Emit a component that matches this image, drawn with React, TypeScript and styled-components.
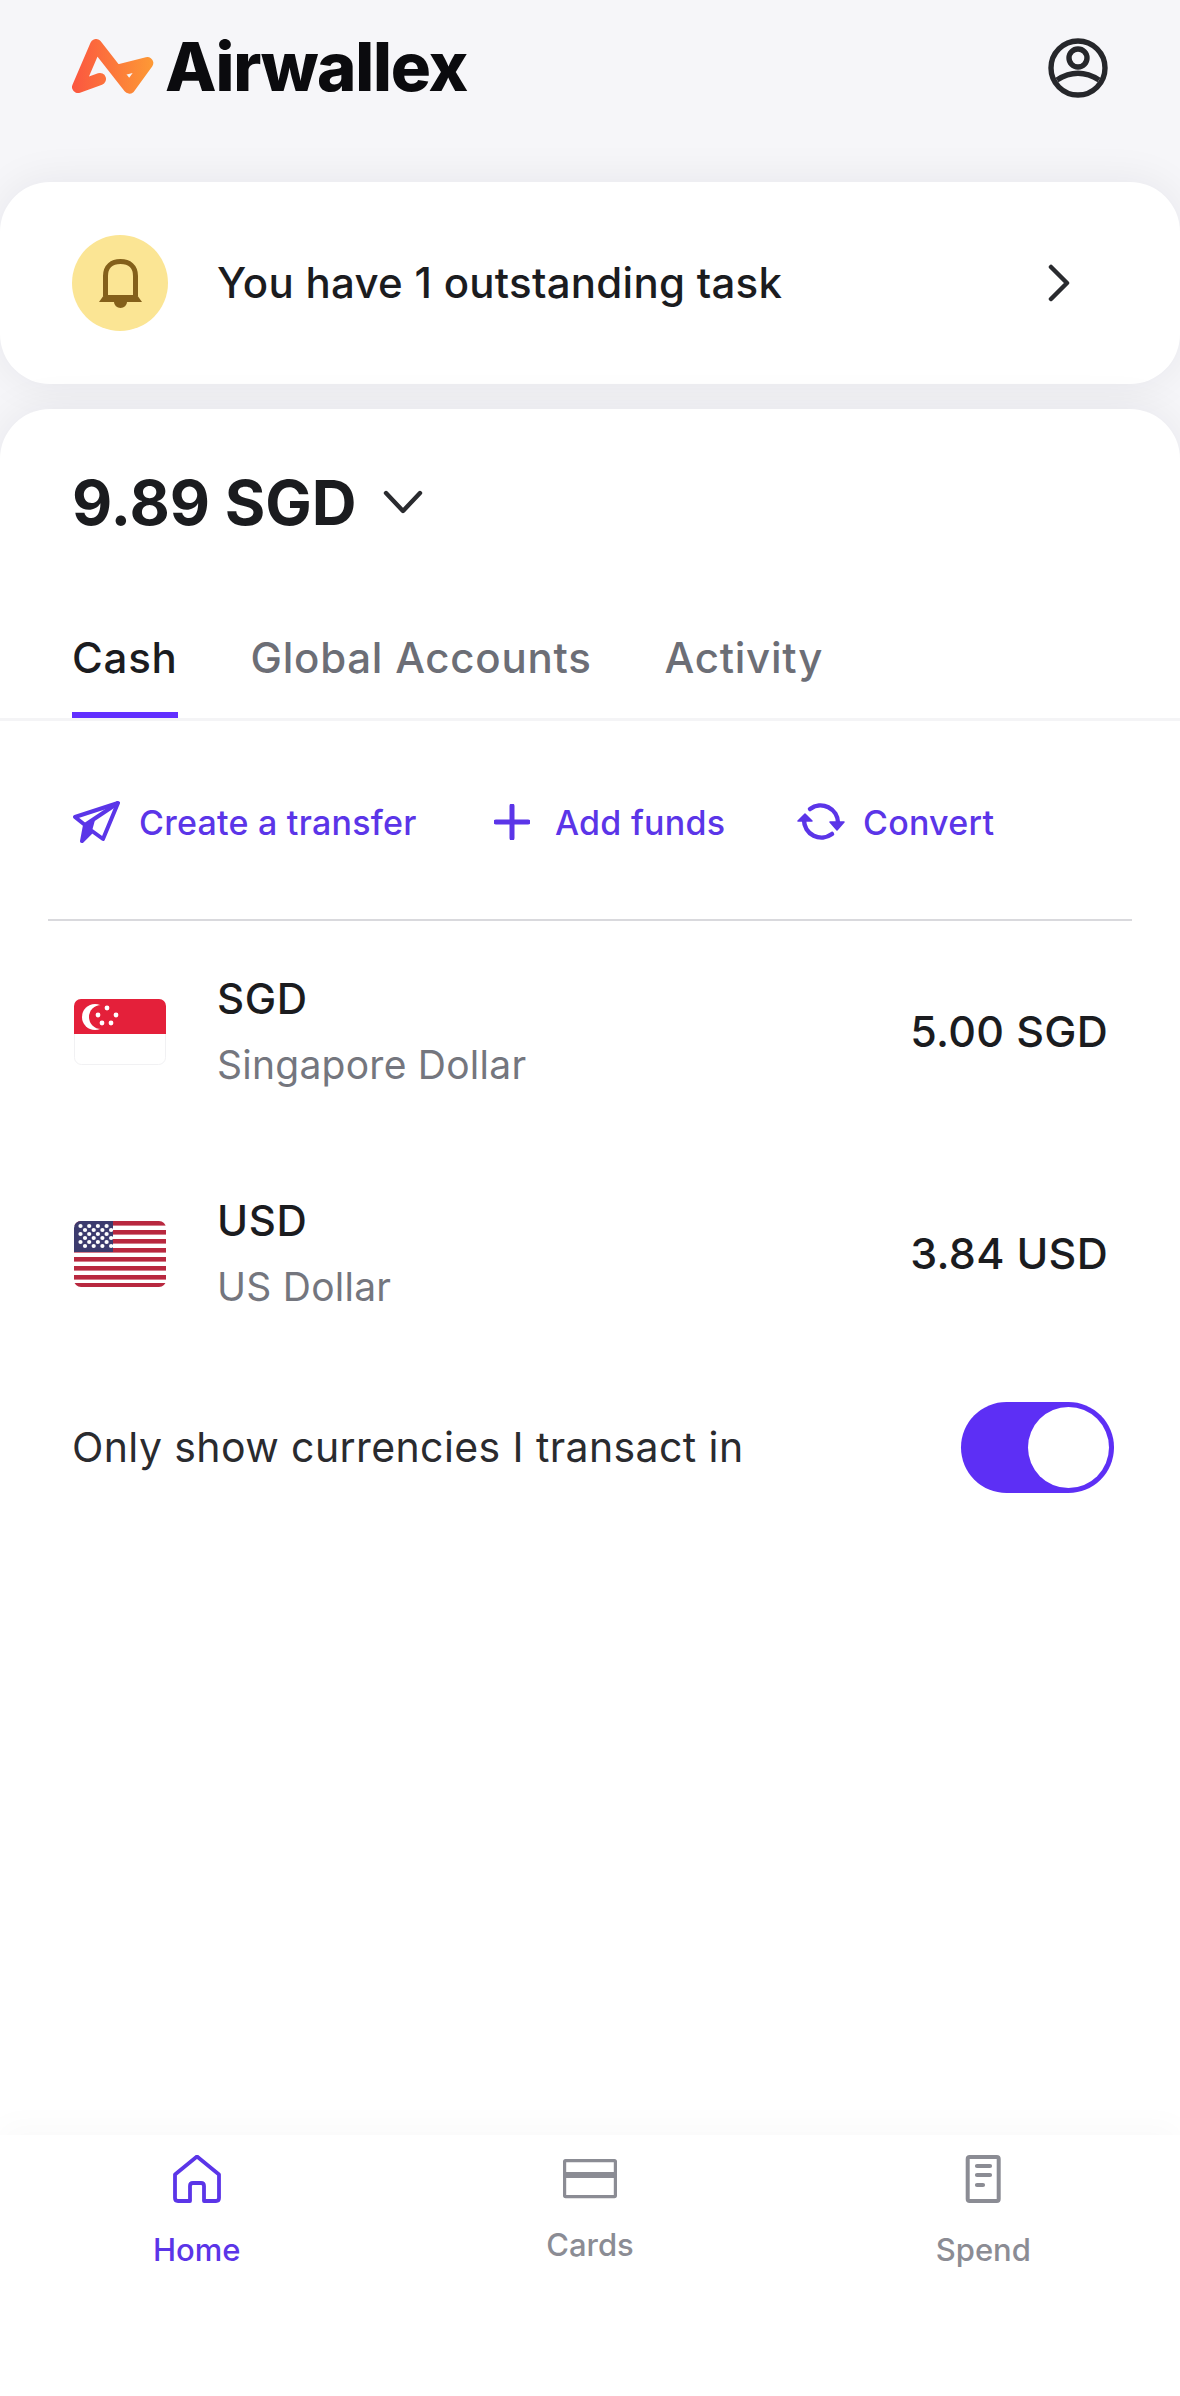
import React from "react";
import styled, { createGlobalStyle } from "styled-components";

const GlobalStyle = createGlobalStyle`
  html, body {
    margin: 0;
    padding: 0;
    background: #ffffff;
    font-family: "Inter", "Liberation Sans", sans-serif;
  }
`;

const Page = styled.div`
  width: 1180px;
  height: 2396px;
  display: flex;
  flex-direction: column;
  overflow: hidden;
  background: #f6f6f9;
`;

const Header = styled.header`
  height: 182px;
  flex: none;
  box-sizing: border-box;
  padding: 36px 72px 0 72px;
  display: flex;
  justify-content: space-between;
  align-items: flex-start;
`;

const Brand = styled.div`
  display: flex;
  align-items: center;
  gap: 11px;
  height: 62px;
`;

const Wordmark = styled.span`
  font-size: 67px;
  font-weight: 800;
  letter-spacing: -1.2px;
  color: #0b0b0e;
  line-height: 62px;
`;

const Avatar = styled.svg`
  width: 60px;
  height: 60px;
  margin-top: 2px;
`;

const TaskCard = styled.section`
  flex: none;
  height: 202px;
  box-sizing: border-box;
  padding: 0 108px 0 72px;
  background: #ffffff;
  border-radius: 50px;
  box-shadow: 0 0 44px rgba(20, 20, 40, 0.07);
  display: flex;
  align-items: center;
  position: relative;
`;

const BellBadge = styled.div`
  width: 96px;
  height: 96px;
  border-radius: 50%;
  background: #fbe594;
  display: flex;
  align-items: center;
  justify-content: center;
`;

const TaskText = styled.span`
  margin: 0 0 2px 49px;
  flex: 1;
  font-size: 42px;
  font-weight: 500;
  letter-spacing: 0.27px;
  color: #1b1c1f;
`;

const Sheet = styled.main`
  flex: 1;
  margin-top: 25px;
  background: #ffffff;
  border-radius: 50px 50px 0 0;
  box-shadow: 0 0 44px rgba(20, 20, 40, 0.07);
  display: flex;
  flex-direction: column;
  position: relative;
`;

const BalanceRow = styled.div`
  height: 186px;
  flex: none;
  padding-left: 72px;
  display: flex;
  align-items: center;
  gap: 26px;
`;

const Balance = styled.span`
  font-size: 62px;
  font-weight: 700;
  letter-spacing: 0;
  color: #1b1c1f;
`;

const Tabs = styled.nav`
  height: 126px;
  flex: none;
  box-sizing: border-box;
  padding-left: 72px;
  border-bottom: 3px solid #f4f4f6;
  display: flex;
  gap: 73px;
`;

const Tab = styled.div<{ $active?: boolean }>`
  height: 123px;
  box-sizing: border-box;
  padding-top: 37px;
  font-size: 42px;
  line-height: 52px;
  font-weight: 500;
  letter-spacing: 0.75px;
  color: ${(p) => (p.$active ? "#1b1c1f" : "#6c6e76")};
  border-bottom: 6px solid ${(p) => (p.$active ? "#612fff" : "transparent")};
`;

const Actions = styled.div`
  height: 198px;
  flex: none;
  box-sizing: border-box;
  padding: 4px 0 0 72px;
  display: flex;
  align-items: center;
`;

const Action = styled.div<{ $gap: number; $width: number }>`
  width: ${(p) => p.$width}px;
  display: flex;
  align-items: center;
  gap: ${(p) => p.$gap}px;
  font-size: 34px;
  font-weight: 500;
  letter-spacing: 0.24px;
  color: #5b35e8;
`;

const Divider = styled.hr`
  margin: 0 48px;
  height: 2px;
  border: 0;
  flex: none;
  background: #d9d9dd;
`;

const CurrencyRow = styled.div`
  height: 222px;
  flex: none;
  box-sizing: border-box;
  padding: 0 72px 0 74px;
  display: flex;
  align-items: center;
`;

const Flag = styled.svg`
  width: 92px;
  height: 66px;
  flex: none;
`;

const CurrencyNames = styled.div`
  margin-left: 51px;
  flex: 1;
  display: flex;
  flex-direction: column;
  gap: 12px;
`;

const Code = styled.div`
  font-size: 42px;
  line-height: 54px;
  font-weight: 500;
  letter-spacing: 0.6px;
  color: #1b1c1f;
`;

const Name = styled.div`
  font-size: 39px;
  line-height: 54px;
  font-weight: 400;
  letter-spacing: 0.25px;
  color: #74767e;
`;

const Amount = styled.div`
  margin-bottom: 3px;
  font-size: 43px;
  font-weight: 500;
  letter-spacing: 0.3px;
  color: #1b1c1f;
`;

const ToggleRow = styled.div`
  height: 164px;
  flex: none;
  box-sizing: border-box;
  padding: 0 66px 0 72px;
  display: flex;
  align-items: center;
  justify-content: space-between;
`;

const ToggleLabel = styled.span`
  font-size: 41px;
  font-weight: 400;
  letter-spacing: 0.4px;
  color: #2a2b2f;
`;

const Toggle = styled.div`
  width: 153px;
  height: 91px;
  box-sizing: border-box;
  padding: 5px;
  border-radius: 46px;
  background: #5d2ff5;
  display: flex;
  justify-content: flex-end;
`;

const Knob = styled.div`
  width: 81px;
  height: 81px;
  border-radius: 50%;
  background: #ffffff;
`;

const BottomNav = styled.footer`
  margin-top: auto;
  height: 261px;
  flex: none;
  background: #ffffff;
  box-shadow: 0 -10px 30px rgba(30, 20, 60, 0.025);
  display: grid;
  grid-template-columns: repeat(3, 1fr);
  position: relative;
`;

const NavItem = styled.div<{ $active?: boolean; $lift?: number }>`
  display: flex;
  flex-direction: column;
  align-items: center;
  box-sizing: border-box;
  padding-top: 20px;
  color: ${(p) => (p.$active ? "#5b35e8" : "#8b8c94")};
  font-size: 31px;
  font-weight: 500;

  span {
    margin-top: ${(p) => 28 - (p.$lift || 0)}px;
    line-height: 38px;
  }
`;

const NavIcon = styled.svg`
  width: 60px;
  height: 48px;
  display: block;
`;

function Logo() {
  return (
    <svg width="82" height="56" viewBox="66 58 246 168">
      <defs>
        <linearGradient id="logoGrad" gradientUnits="userSpaceOnUse" x1="66" y1="0" x2="312" y2="0">
          <stop offset="0" stopColor="#fb5640" />
          <stop offset="1" stopColor="#fd9a35" />
        </linearGradient>
      </defs>
      <path
        d="M150 178 L84 202 L138 76 L238 204 L292 130 L206 152"
        fill="none"
        stroke="url(#logoGrad)"
        strokeWidth="36"
        strokeLinecap="round"
        strokeLinejoin="round"
      />
    </svg>
  );
}

function AvatarIcon() {
  return (
    <Avatar viewBox="0 0 60 60" fill="none" stroke="#26272b" strokeWidth="5.4">
      <circle cx="30" cy="30" r="27" />
      <circle cx="30" cy="20" r="9" />
      <path d="M9 42 Q30 28.6 51 42" />
    </Avatar>
  );
}

function BellIcon() {
  return (
    <svg width="43" height="49" viewBox="0 0 43 49" fill="none" stroke="#84601a" strokeWidth="5">
      <path d="M6.5 37 V17 C6.5 7 13 2.5 21.5 2.5 C30 2.5 36.5 7 36.5 17 V37" />
      <path d="M0 43 L5 36 H38 L43 43 Z" fill="#84601a" stroke="none" />
      <path d="M15 43 H28 A6.5 6 0 0 1 15 43 Z" fill="#84601a" stroke="none" />
    </svg>
  );
}

function PlaneIcon() {
  return (
    <svg width="48" height="42" viewBox="0 0 48 42" fill="none" stroke="#5b35e8" strokeWidth="4" strokeLinejoin="round">
      <path d="M46 2 L3 16 L13 24 L10 40 L20 30 L31 38 Z" />
      <path d="M46 2 L13 24" />
      <path d="M13 24 L23 19 L20 30 L10 40 Z" fill="#5b35e8" stroke="none" />
    </svg>
  );
}

function PlusIcon() {
  return (
    <svg width="36" height="36" viewBox="0 0 36 36" stroke="#5b35e8" strokeWidth="5" strokeLinecap="round">
      <path d="M18 2 V34 M2 18 H34" />
    </svg>
  );
}

function ConvertIcon() {
  return (
    <svg width="48" height="42" viewBox="0 0 48 42" fill="none" stroke="#5b35e8" strokeWidth="4.5" strokeLinecap="round">
      <path d="M13 8 A17.5 17.5 0 0 1 41 22" />
      <path d="M35 33 A17.5 17.5 0 0 1 7 19" />
      <path d="M33 21 H47 L40 29 Z M1 20 H15 L8 13 Z" fill="#5b35e8" stroke="#5b35e8" strokeWidth="1.5" strokeLinejoin="round" />
    </svg>
  );
}

function SingaporeFlag() {
  return (
    <Flag viewBox="0 0 92 66">
      <rect x="0.5" y="0.5" width="91" height="65" rx="7" fill="#ffffff" stroke="#f1f1f3" />
      <path d="M7 0 H85 A7 7 0 0 1 92 7 V35 H0 V7 A7 7 0 0 1 7 0 Z" fill="#e4203a" />
      <circle cx="21" cy="18" r="13" fill="#ffffff" />
      <circle cx="27" cy="18" r="12" fill="#e4203a" />
      <g fill="#ffffff">
        <circle cx="33" cy="9" r="2.4" />
        <circle cx="24" cy="16" r="2.4" />
        <circle cx="42" cy="16" r="2.4" />
        <circle cx="28" cy="24" r="2.4" />
        <circle cx="37" cy="24" r="2.4" />
      </g>
    </Flag>
  );
}

const stripes = [0, 9, 18, 27, 36, 45, 54, 62];
const starRows = [5, 13, 21, 9, 17, 25];

function UsFlag() {
  return (
    <Flag viewBox="0 0 92 66">
      <defs>
        <clipPath id="usClip">
          <rect width="92" height="66" rx="7" />
        </clipPath>
      </defs>
      <g clipPath="url(#usClip)">
        <rect width="92" height="66" fill="#ffffff" />
        {stripes.map((y) => (
          <rect key={y} y={y} width="92" height="4.6" fill="#b8283f" />
        ))}
        <rect width="39" height="31" fill="#3c3b6e" />
        {starRows.map((y, i) =>
          [0, 1, 2, 3].map((n) => (
            <circle key={`${i}-${n}`} cx={(i < 3 ? 6.5 : 11) + n * 8.7} cy={y} r="2.1" fill="#ffffff" />
          ))
        )}
      </g>
    </Flag>
  );
}

function HomeIcon() {
  return (
    <NavIcon viewBox="0 0 60 48" fill="none" stroke="currentColor" strokeWidth="3.8" strokeLinejoin="round">
      <path d="M8 19.5 L30 1.5 L52 19.5 V43 Q52 46 49 46 H37 V31 Q37 28 34 28 H26 Q23 28 23 31 V46 H11 Q8 46 8 43 Z" />
    </NavIcon>
  );
}

function CardIcon() {
  return (
    <NavIcon viewBox="0 0 60 48" fill="none" stroke="currentColor" strokeWidth="3.2">
      <rect x="4.6" y="5.6" width="50.8" height="36" rx="1" />
      <path d="M4.6 20 H55.4" strokeWidth="6" />
    </NavIcon>
  );
}

function SpendIcon() {
  return (
    <NavIcon viewBox="0 0 60 48" fill="none" stroke="currentColor" strokeWidth="4">
      <rect x="14.7" y="2" width="31" height="44" rx="2" />
      <path d="M24 11 H37 M24 20 H37 M24 30 H30" strokeWidth="4.2" strokeLinecap="round" />
    </NavIcon>
  );
}

function App() {
  return (
    <Page>
      <GlobalStyle />
      <Header>
        <Brand>
          <Logo />
          <Wordmark>Airwallex</Wordmark>
        </Brand>
        <AvatarIcon />
      </Header>
      <TaskCard>
        <BellBadge>
          <BellIcon />
        </BellBadge>
        <TaskText>You have 1 outstanding task</TaskText>
        <svg width="26" height="38" viewBox="0 0 26 38" fill="none" stroke="#2a2b2f" strokeWidth="4.5" strokeLinecap="round" strokeLinejoin="round">
          <path d="M5 3 L21 19 L5 35" />
        </svg>
      </TaskCard>
      <Sheet>
        <BalanceRow>
          <Balance>9.89 SGD</Balance>
          <svg width="40" height="24" viewBox="0 0 40 24" fill="none" stroke="#2a2b2f" strokeWidth="4.4" strokeLinecap="round" strokeLinejoin="round">
            <path d="M3 3 L20 21 L37 3" />
          </svg>
        </BalanceRow>
        <Tabs>
          <Tab $active>Cash</Tab>
          <Tab>Global Accounts</Tab>
          <Tab>Activity</Tab>
        </Tabs>
        <Actions>
          <Action $gap={19} $width={422}>
            <PlaneIcon />
            Create a transfer
          </Action>
          <Action $gap={25} $width={303}>
            <PlusIcon />
            Add funds
          </Action>
          <Action $gap={18} $width={220}>
            <ConvertIcon />
            Convert
          </Action>
        </Actions>
        <Divider />
        <CurrencyRow>
          <SingaporeFlag />
          <CurrencyNames>
            <Code>SGD</Code>
            <Name>Singapore Dollar</Name>
          </CurrencyNames>
          <Amount>5.00 SGD</Amount>
        </CurrencyRow>
        <CurrencyRow>
          <UsFlag />
          <CurrencyNames>
            <Code>USD</Code>
            <Name>US Dollar</Name>
          </CurrencyNames>
          <Amount>3.84 USD</Amount>
        </CurrencyRow>
        <ToggleRow>
          <ToggleLabel>Only show currencies I transact in</ToggleLabel>
          <Toggle>
            <Knob />
          </Toggle>
        </ToggleRow>
        <BottomNav>
          <NavItem $active>
            <HomeIcon />
            <span>Home</span>
          </NavItem>
          <NavItem $lift={5}>
            <CardIcon />
            <span>Cards</span>
          </NavItem>
          <NavItem>
            <SpendIcon />
            <span>Spend</span>
          </NavItem>
        </BottomNav>
      </Sheet>
    </Page>
  );
}

export default App;
